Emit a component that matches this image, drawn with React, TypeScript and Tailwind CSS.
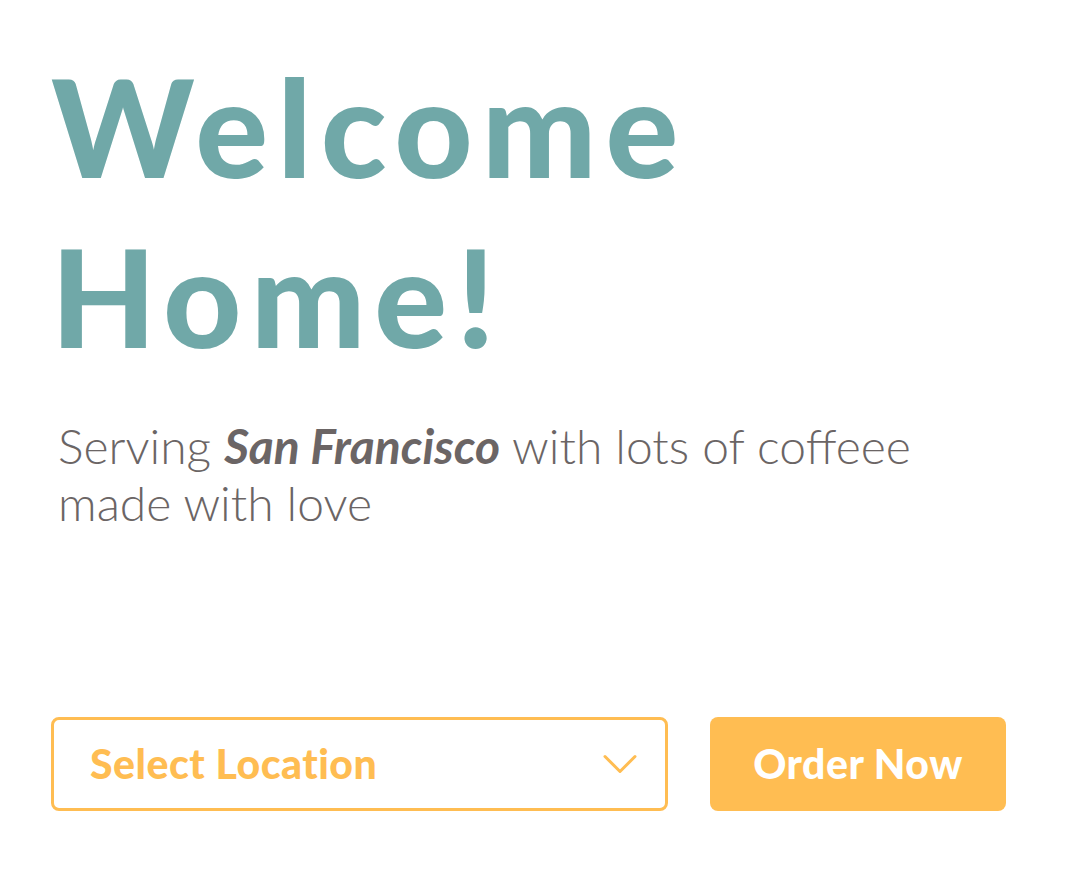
import { ChevronDown } from 'lucide-react';

export default function App() {
  return (
    <main className="min-h-[886px] w-[1076px] bg-white pl-[51px] pt-[41px] font-['Lato',sans-serif]">
      <h1 className="text-[136px] font-black leading-[170px] tracking-[9px] text-[#70a8a8]">
        Welcome
        <br />
        Home!
      </h1>

      <p className="mt-[36px] pl-[7px] text-[48px] font-light leading-[57px] text-[#6b6565]">
        Serving <em className="font-bold italic">San Francisco</em> with lots of coffeee
        <br />
        made with love
      </p>

      <div className="mt-[186px] flex items-center gap-[42px]">
        <button
          className="flex h-[94px] w-[617px] items-center justify-between rounded-[8px] border-[3px] border-[#ffbd52] pl-[36px] pr-[30px] text-[41px] font-black tracking-[0.5px] text-[#ffbd52]"
          type="button"
        >
          Select Location
          <ChevronDown className="-mr-[15px] h-[60px] w-[60px]" strokeWidth={1.2} />
        </button>
        <button
          className="flex h-[94px] w-[296px] items-center justify-center rounded-[8px] bg-[#ffbd52] text-[41px] font-black tracking-[0.5px] text-white"
          type="button"
        >
          Order Now
        </button>
      </div>
    </main>
  );
}
